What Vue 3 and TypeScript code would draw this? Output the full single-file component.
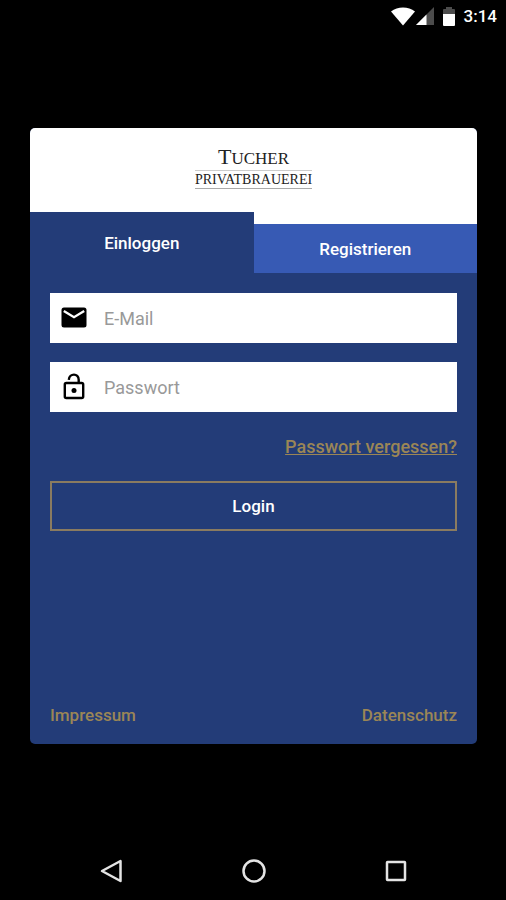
<script setup lang="ts">
import { ref } from 'vue'

type Tab = 'login' | 'register'

const activeTab = ref<Tab>('login')
const email = ref('')
const password = ref('')
</script>

<template>
  <div class="screen">
    <header class="status-bar">
      <svg class="wifi" viewBox="0 0 24 19" aria-hidden="true">
        <path d="M0 4.5C3.5 1.7 7.500 0.500 12 0.500S20.500 1.700 24 4.500L12 18.500Z" fill="#fff" />
      </svg>
      <svg class="signal" viewBox="0 0 18 18" aria-hidden="true">
        <path d="M18 0V18H0Z" fill="#4c4c4c" />
        <path d="M10.500 7.500V18H0Z" fill="#fff" />
      </svg>
      <svg class="battery" viewBox="0 0 12 19" aria-hidden="true">
        <path d="M3 0H9V2H11Q12 2 12 3V7H0V3Q0 2 1 2H3Z" fill="#4c4c4c" />
        <path d="M0 7H12V18Q12 19 11 19H1Q0 19 0 18Z" fill="#fff" />
      </svg>
      <time class="clock">3:14</time>
    </header>

    <main class="card">
      <div class="brand">
        <span class="brand-name"><span class="initial">T</span>UCHER</span>
        <span class="brand-line">PRIVATBRAUEREI</span>
      </div>

      <div class="tabs">
        <button
          type="button"
          class="tab"
          :class="{ active: activeTab === 'login' }"
          @click="activeTab = 'login'"
        >Einloggen</button>
        <button
          type="button"
          class="tab"
          :class="{ active: activeTab === 'register' }"
          @click="activeTab = 'register'"
        >Registrieren</button>
      </div>

      <form class="form" @submit.prevent>
        <div class="field">
          <label for="email" aria-label="E-Mail">
            <svg class="icon" viewBox="0 0 30 30" aria-hidden="true">
              <rect x="2.500" y="4.500" width="25" height="20" rx="2.500" fill="#000" />
              <path d="M4.800 8L15 14.200L25.200 8" fill="none" stroke="#fff" stroke-width="2.400" />
            </svg>
          </label>
          <input id="email" v-model="email" type="email" placeholder="E-Mail" />
        </div>
        <div class="field">
          <label for="password" aria-label="Passwort">
            <svg class="icon" viewBox="0 0 30 30" aria-hidden="true">
              <rect x="5.800" y="11" width="18.400" height="15" rx="1.500" fill="none" stroke="#000" stroke-width="2.400" />
              <path d="M9.800 7.800C10.300 1 19.700 0.800 19.700 7.800V11" fill="none" stroke="#000" stroke-width="2.400" />
              <circle cx="15" cy="18.500" r="2.500" fill="#000" />
            </svg>
          </label>
          <input id="password" v-model="password" type="password" placeholder="Passwort" />
        </div>
        <a class="link forgot" href="#passwort">Passwort vergessen?</a>
        <button type="submit" class="submit">Login</button>
      </form>

      <footer class="legal">
        <a class="link" href="#impressum">Impressum</a>
        <a class="link" href="#datenschutz">Datenschutz</a>
      </footer>
    </main>

    <nav class="nav-bar">
      <button type="button" aria-label="Zurück">
        <svg viewBox="0 0 26 26" aria-hidden="true">
          <path d="M21.500 3V23L3 13Z" />
        </svg>
      </button>
      <button type="button" aria-label="Startseite">
        <svg viewBox="0 0 26 26" aria-hidden="true">
          <circle cx="13" cy="13" r="10.500" />
        </svg>
      </button>
      <button type="button" aria-label="Übersicht">
        <svg viewBox="0 0 26 26" aria-hidden="true">
          <rect x="4" y="4" width="18" height="18" rx="0.500" />
        </svg>
      </button>
    </nav>
  </div>
</template>

<style>
body {
  background: #000;
}
</style>

<style scoped>
.screen {
  display: flex;
  flex-direction: column;
  min-height: 100vh;
  background: #000;
  color: #fff;
  font-family: Roboto, sans-serif;
  font-size: 17px;
  font-weight: 500;
  line-height: 20px;
}

button,
input {
  margin: 0;
  border: 0;
  border-radius: 0;
  font: inherit;
}

button {
  padding: 0;
  background: none;
  color: inherit;
  cursor: pointer;
}

.status-bar {
  display: flex;
  align-items: center;
  justify-content: flex-end;
  height: 32px;
  padding-right: 9px;
}

.wifi {
  width: 24px;
  height: 19px;
}

.signal {
  width: 18px;
  height: 18px;
  margin-left: 1px;
}

.battery {
  width: 12px;
  height: 19px;
  margin: 0 9px;
}

.card {
  display: flex;
  flex: 1;
  flex-direction: column;
  margin: 96px 29px 98px 30px;
  overflow: hidden;
  border-radius: 5px;
  background: #233c78;
}

.brand {
  display: flex;
  flex-direction: column;
  align-items: center;
  height: 66px;
  padding-top: 18px;
  background: #fff;
  color: #222;
  font-family: "Liberation Serif", serif;
  font-weight: 400;
}

.brand-name {
  font-size: 17px;
  line-height: 22px;
}

.initial {
  font-size: 22px;
}

.brand-line {
  border-top: 1px solid #ccc;
  border-bottom: 1px solid #aaa;
  font-size: 14px;
  line-height: 17px;
}

.tabs {
  display: flex;
  align-items: flex-end;
  background: linear-gradient(#fff 50%, #233c78 50%);
}

.tab {
  flex: 1;
  height: 49px;
  margin-top: 12px;
  background: #375ab4;
}

.tab.active {
  height: 61px;
  margin-top: 0;
  background: #233c78;
}

.form {
  display: flex;
  flex: 1;
  flex-direction: column;
  gap: 19px;
  padding: 20px;
}

.field {
  display: flex;
  align-items: center;
  height: 50px;
  background: #fff;
}

.field label {
  display: flex;
  padding: 0 15px 0 9px;
}

.icon {
  width: 30px;
  height: 30px;
}

.field input {
  flex: 1;
  min-width: 0;
  height: 50px;
  padding: 0;
  outline: 0;
  background: transparent;
  color: #222;
  font-size: 18px;
  font-weight: 400;
}

.field input::placeholder {
  color: #999;
  opacity: 1;
}

.link {
  color: #9b8656;
  text-decoration: none;
}

.forgot {
  align-self: flex-end;
  margin: 6px 0 5px;
  font-size: 18px;
  text-decoration: underline;
}

.submit {
  height: 50px;
  border: 2px solid #8a7b60;
}

.legal {
  display: flex;
  justify-content: space-between;
  padding: 0 20px 19px;
}

.nav-bar {
  display: flex;
  justify-content: space-around;
  padding: 16px 39px 16px 41px;
}

.nav-bar button {
  display: flex;
}

.nav-bar svg {
  width: 26px;
  height: 26px;
  fill: none;
  stroke: #e4e4e4;
  stroke-width: 2.500;
  stroke-linejoin: round;
}
</style>
